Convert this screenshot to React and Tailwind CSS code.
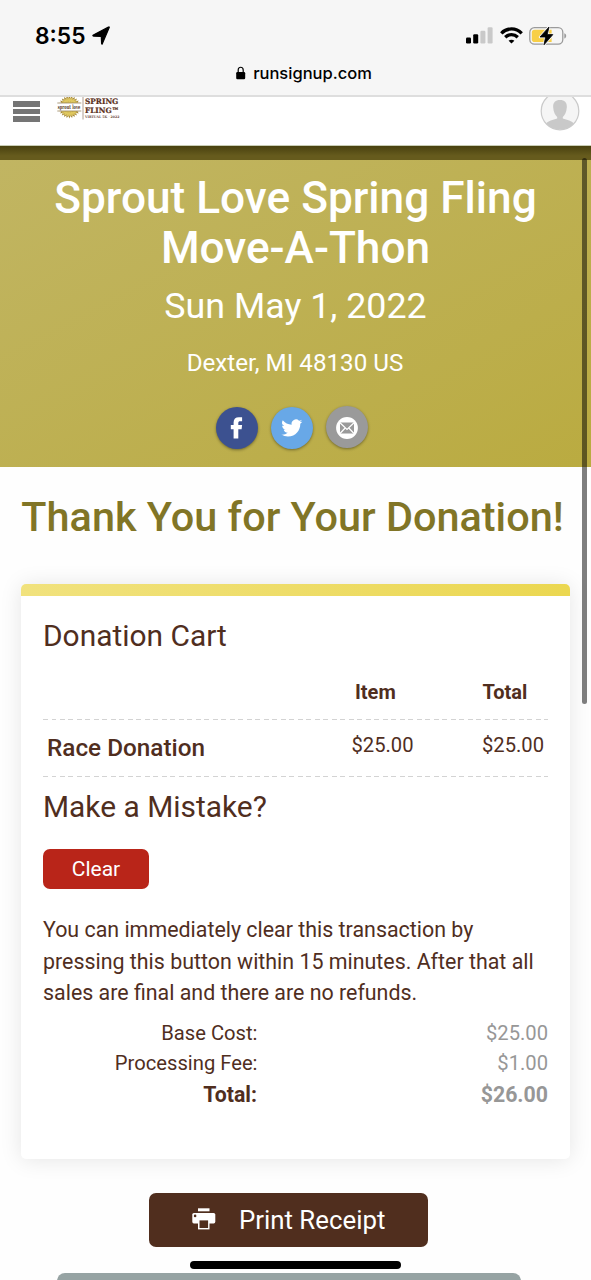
import React from "react";

function LocationArrow() {
  return (
    <svg width="20" height="20" viewBox="0 0 20 20" className="ml-[5px]">
      <path d="M18.2 1.6 L11.4 17.6 Q10.8 18.7 10.6 17.5 L10.3 10.4 L2.6 10.1 Q1.2 9.8 2.4 9.1 L17 1.2 Q18.7 0.5 18.2 1.6 Z" fill="#000" stroke="#000" strokeWidth="1.2" strokeLinejoin="round" />
    </svg>
  );
}

function Signal() {
  return (
    <svg width="27" height="17" viewBox="0 0 27 17">
      <rect x="0" y="10.5" width="5" height="6" rx="1.2" fill="#000" />
      <rect x="7.2" y="7.2" width="5" height="9.3" rx="1.2" fill="#000" />
      <rect x="14.4" y="3.8" width="5" height="12.7" rx="1.2" fill="#c9c9c9" />
      <rect x="21.6" y="0.2" width="5" height="16.3" rx="1.2" fill="#c9c9c9" />
    </svg>
  );
}

function Wifi() {
  return (
    <svg width="23" height="17" viewBox="0 0 23 17" className="ml-[6.5px]" fill="none" stroke="#000" strokeWidth="3.3">
      <path d="M1.3 6.3 C7 0.5 16 0.5 21.7 6.3" />
      <path d="M5.2 10.3 C8.8 6.8 14.2 6.8 17.8 10.3" />
      <path d="M11.5 16.6 L8.6 13.7 C10.2 12.3 12.8 12.3 14.4 13.7 Z" fill="#000" stroke="none" />
    </svg>
  );
}

function Battery() {
  return (
    <svg width="39" height="20" viewBox="0 0 39 20" className="ml-[6.5px]">
      <rect x="0.8" y="1.7" width="33" height="16.4" rx="4.6" fill="none" stroke="#9b9b9b" strokeWidth="1.3" />
      <path d="M35.3 7.2 C37.8 8 37.8 11.8 35.3 12.6 Z" fill="#9b9b9b" />
      <path d="M5.6 3.7 H22.6 V16 H5.6 Q2.8 16 2.8 13.2 V6.5 Q2.8 3.7 5.6 3.7 Z" fill="#f8cf46" />
      <path d="M20 1 L11 11 H16.6 L15 18.8 L23.8 8.6 H18.2 Z" fill="#000" stroke="#f6f6f6" strokeWidth="2.4" strokeLinejoin="round" />
      <path d="M20 1 L11 11 H16.6 L15 18.8 L23.8 8.6 H18.2 Z" fill="#000" stroke="#000" strokeWidth="0.8" strokeLinejoin="round" />
    </svg>
  );
}

function Lock() {
  return (
    <svg width="10" height="14" viewBox="0 0 10 14" className="mr-[7px]">
      <path d="M2.2 7 V4 C2.2 0.3 7.2 0.3 7.2 4 V7" fill="none" stroke="#000" strokeWidth="1.2" />
      <rect x="0.2" y="6" width="9" height="7.2" rx="1.2" fill="#000" />
    </svg>
  );
}

const rays = Array.from({ length: 26 }, (_, i) => (i * 360) / 26);

function Logo() {
  return (
    <svg width="66" height="28" viewBox="0 0 66 28">
      <g transform="translate(12.4 10)">
        {rays.map((r) => (
          <path key={r} d="M-1.2 -8.6 L0 -11.4 L1.2 -8.6 Z" fill="#a88a34" transform={`rotate(${r})`} />
        ))}
        <circle r="9" fill="#dfc860" />
        <circle r="8.4" fill="none" stroke="#b39336" strokeWidth="0.8" strokeDasharray="1 1.2" />
        <circle r="5.6" fill="none" stroke="#c7aa47" strokeWidth="0.6" strokeDasharray="1 1.4" />
      </g>
      <rect x="1" y="6" width="23" height="8" fill="#fff" />
      <path d="M0.3 6 H24.3 M0.3 14 H24.3" stroke="#8a7247" strokeWidth="0.7" />
      <text x="0.8" y="12" textLength="22.5" lengthAdjust="spacingAndGlyphs" fontFamily="DejaVu Serif, serif" fontWeight="700" fontSize="5.8" fill="#59402c">sprout love</text>
      <path d="M26 0 V22.5" stroke="#9d8577" strokeWidth="0.8" />
      <text x="28" y="7" textLength="33.4" lengthAdjust="spacingAndGlyphs" fontFamily="DejaVu Serif, serif" fontWeight="700" fontSize="7.5" fill="#5a3021" stroke="#5a3021" strokeWidth="0.2">SPRING</text>
      <text x="28" y="15.8" textLength="34" lengthAdjust="spacingAndGlyphs" fontFamily="DejaVu Serif, serif" fontWeight="700" fontSize="7.4" fill="#5a3021" stroke="#5a3021" strokeWidth="0.2">FLING™</text>
      <text x="28" y="21.4" textLength="34.4" lengthAdjust="spacingAndGlyphs" fontFamily="DejaVu Serif, serif" fontWeight="700" fontSize="3.3" fill="#6d4a3c">VIRTUAL 5K · 2022</text>
    </svg>
  );
}

function Avatar() {
  return (
    <svg width="40" height="40" viewBox="0 0 40 40" className="-mt-[6px]">
      <defs>
        <clipPath id="face"><circle cx="20" cy="20" r="18.6" /></clipPath>
      </defs>
      <circle cx="20" cy="20" r="18.8" fill="#f5f5f5" />
      <g clipPath="url(#face)" fill="#c9c9c9">
        <path d="M20 9 C15 9 12.8 12 13.2 16.5 C13.4 21 15.5 24.5 17.2 26 V27.5 C13 28.6 8 30 5.5 33 V40 H34.5 V33 C32 30 27 28.6 22.8 27.5 V26 C24.5 24.5 26.6 21 26.8 16.5 C27.2 12 25 9 20 9 Z" />
      </g>
      <circle cx="20" cy="20" r="18.8" fill="none" stroke="#cacaca" strokeWidth="1.2" />
    </svg>
  );
}

function Facebook() {
  return (
    <svg width="42" height="42" viewBox="0 0 42 42" fill="#fff">
      <path d="M17.6 31.5 V22.2 H14.8 V18 H17.6 V15.6 C17.6 12 19.5 10.2 22.9 10.2 H26.1 V14.2 H24.2 C22.8 14.2 22.3 14.8 22.3 16 V18 H26.1 L25.6 22.2 H22.3 V31.5 Z" />
    </svg>
  );
}

function Twitter() {
  return (
    <svg width="42" height="42" viewBox="0 0 42 42" fill="#fff">
      <path transform="translate(10.3 10.4) scale(.88)" d="M23.95 4.57a10 10 0 0 1-2.82.77 4.96 4.96 0 0 0 2.16-2.72c-.95.55-2 .95-3.13 1.19a4.92 4.92 0 0 0-8.38 4.48C7.69 8.1 4.07 6.13 1.64 3.16a4.92 4.92 0 0 0 1.52 6.57 4.9 4.9 0 0 1-2.23-.61v.06c0 2.38 1.7 4.37 3.95 4.82a5 5 0 0 1-2.21.09 4.94 4.94 0 0 0 4.6 3.42A9.87 9.87 0 0 1 0 19.54a14 14 0 0 0 7.55 2.21c9.05 0 14-7.5 14-13.98 0-.21 0-.42-.02-.63a9.94 9.94 0 0 0 2.42-2.57z" />
    </svg>
  );
}

function Mail() {
  return (
    <svg width="42" height="42" viewBox="0 0 42 42" fill="none">
      <circle cx="21" cy="22" r="10.9" fill="#fff" />
      <rect x="14" y="16.5" width="14" height="11" rx="1" fill="#9a9a9a" />
      <path d="M14 16.8 L21 23.5 L28 16.8 M14 27.5 L19.2 22 M28 27.5 L22.8 22" stroke="#fff" strokeWidth="1.2" />
    </svg>
  );
}

function Printer() {
  return (
    <svg width="24" height="22" viewBox="0 0 24 22" className="-mt-[2px]">
      <rect x="6" y="0.3" width="11.5" height="3" fill="#fff" />
      <rect x="0.3" y="5" width="23" height="10.4" rx="1.6" fill="#fff" />
      <circle cx="3.1" cy="7.9" r="1.3" fill="#502e1e" />
      <rect x="6" y="11" width="11.5" height="10.4" fill="#fff" />
      <rect x="7.5" y="12.4" width="8.6" height="7.6" fill="#502e1e" />
    </svg>
  );
}

function Dashes() {
  return (
    <div className="h-[1.5px] bg-[repeating-linear-gradient(90deg,#d3d3d3_0_4.8px,transparent_4.8px_8.5px)]" />
  );
}

const costs = [
  ["Base Cost:", "$25.00"],
  ["Processing Fee:", "$1.00"],
];

export default function App() {
  return (
    <div className="relative flex h-[1280px] w-[591px] flex-col overflow-hidden bg-[#fefefe] font-[Roboto,sans-serif] text-[#502e1e]">
      <header className="h-[97px] shrink-0 border-b-2 border-[#dedede] bg-[#f6f6f6] font-[Inter,sans-serif] text-black">
        <div className="flex h-[58px] items-center justify-between pt-[13px] pr-[23px] pl-[35px]">
          <div className="flex items-center">
            <span className="text-[22.8px] leading-[28px] font-semibold">8:55</span>
            <LocationArrow />
          </div>
          <div className="flex items-center">
            <Signal />
            <Wifi />
            <Battery />
          </div>
        </div>
        <div className="flex h-[30px] items-center justify-center pl-[17px]">
          <Lock />
          <span className="text-[16.5px] leading-[20px] font-medium">runsignup.com</span>
        </div>
      </header>

      <nav className="relative z-10 flex h-[49px] shrink-0 items-start justify-between overflow-hidden border-b border-[#c9cdb5] bg-white pr-[11px] pl-[13px]">
        <div className="flex">
          <div className="mt-[4px] flex w-[27px] flex-col gap-[2px]">
            <div className="h-[5.6px] bg-[#757575]" />
            <div className="h-[5.6px] bg-[#757575]" />
            <div className="h-[5.6px] bg-[#757575]" />
          </div>
          <div className="ml-[16.5px]"><Logo /></div>
        </div>
        <Avatar />
      </nav>
      <div className="h-[14px] shrink-0 bg-linear-to-b from-[#49410f] to-[#665b1d] to-70%" />

      <section className="flex h-[307px] shrink-0 flex-col items-center bg-linear-to-br from-[#c1b562] to-[#baab40] pt-[13px] text-center text-white">
        <h1 className="text-[44.2px] leading-[50px] font-medium">
          Sprout Love Spring Fling<br />Move-A-Thon
        </h1>
        <p className="mt-[11px] text-[35.8px] leading-[44px]">Sun May 1, 2022</p>
        <p className="mt-[20px] pr-px text-[24.2px] leading-[30px]">Dexter, MI 48130 US</p>
        <div className="mt-[28.5px] flex gap-[13px] pr-[8px]">
          <div className="size-[42px] rounded-full bg-[#3c5190] shadow-[0_1px_3px_rgba(0,0,0,0.4)]"><Facebook /></div>
          <div className="size-[42px] rounded-full bg-[#68a8e7] shadow-[0_1px_3px_rgba(0,0,0,0.4)]"><Twitter /></div>
          <div className="-mt-[1px] size-[42px] rounded-full bg-[#9a9a9a] shadow-[0_1px_3px_rgba(0,0,0,0.4)]"><Mail /></div>
        </div>
      </section>

      <h2 className="mt-[25px] mb-px shrink-0 pr-[6px] text-center text-[41.4px] leading-[50px] font-medium whitespace-nowrap text-[#817526]">
        Thank You for Your Donation!
      </h2>

      <main className="mt-[41px] mr-[21.5px] ml-[21px] h-[574.5px] shrink-0 overflow-visible rounded-[5px] bg-white shadow-[0_1px_22px_rgba(0,0,0,0.1)]">
        <div className="h-[12px] rounded-t-[5px] bg-linear-to-r from-[#f1e27d] to-[#ebd750]" />
        <div className="flex flex-col pr-[21.5px] pl-[22px]">
          <h3 className="mt-[22px] text-[29.9px] leading-[36px]">Donation Cart</h3>
          <div className="grid h-[64.5px] grid-cols-[254px_123px_1fr] pt-[26px] text-[20px] leading-[24px] font-bold">
            <span />
            <span className="pl-[58px]">Item</span>
            <span className="pl-[62.5px]">Total</span>
          </div>
          <Dashes />
          <div className="grid h-[55.5px] grid-cols-[254px_123px_1fr] pt-[13px] text-[20.2px] leading-[24px]">
            <span className="pl-[4px] text-[24.3px] leading-[30px] font-medium">Race Donation</span>
            <span className="pr-[6.5px] text-right">$25.00</span>
            <span className="pr-[4px] text-right">$25.00</span>
          </div>
          <Dashes />
          <h3 className="mt-[12px] text-[29.9px] leading-[36px]">Make a Mistake?</h3>
          <button className="mt-[24px] h-[40px] w-[106px] rounded-[7px] bg-[#b92519] text-[21px] leading-[40px] text-white">Clear</button>
          <p className="mt-[25px] text-[21.4px] leading-[31.5px] whitespace-nowrap">
            You can immediately clear this transaction by<br />
            pressing this button within 15 minutes. After that all<br />
            sales are final and there are no refunds.
          </p>
          <dl className="mt-[9.5px] text-[20.2px] leading-[30.3px]">
            {costs.map(([label, value]) => (
              <div key={label} className="flex justify-between">
                <dt className="w-[214.5px] text-right">{label}</dt>
                <dd className="text-[#979797]">{value}</dd>
              </div>
            ))}
            <div className="flex justify-between pt-px text-[21.3px] font-bold">
              <dt className="w-[214px] text-right">Total:</dt>
              <dd className="text-[#979797]">$26.00</dd>
            </div>
          </dl>
        </div>
      </main>

      <button className="mt-[34px] ml-[149px] flex h-[54px] w-[279px] shrink-0 items-center rounded-[7px] bg-[#502e1e] pl-[43px] text-white">
        <Printer />
        <span className="ml-[23px] text-[25.8px] leading-[54px]">Print Receipt</span>
      </button>
      <div className="mt-[14.5px] ml-[190px] h-[8px] w-[211px] shrink-0 rounded-full bg-black" />
      <div className="mt-[4px] ml-[57px] h-[40px] w-[464px] shrink-0 rounded-[8px] bg-[#96a3a3]" />

      <div className="absolute top-[158px] left-[582px] z-20 h-[546px] w-[5px] rounded-full bg-black/50" />
    </div>
  );
}
